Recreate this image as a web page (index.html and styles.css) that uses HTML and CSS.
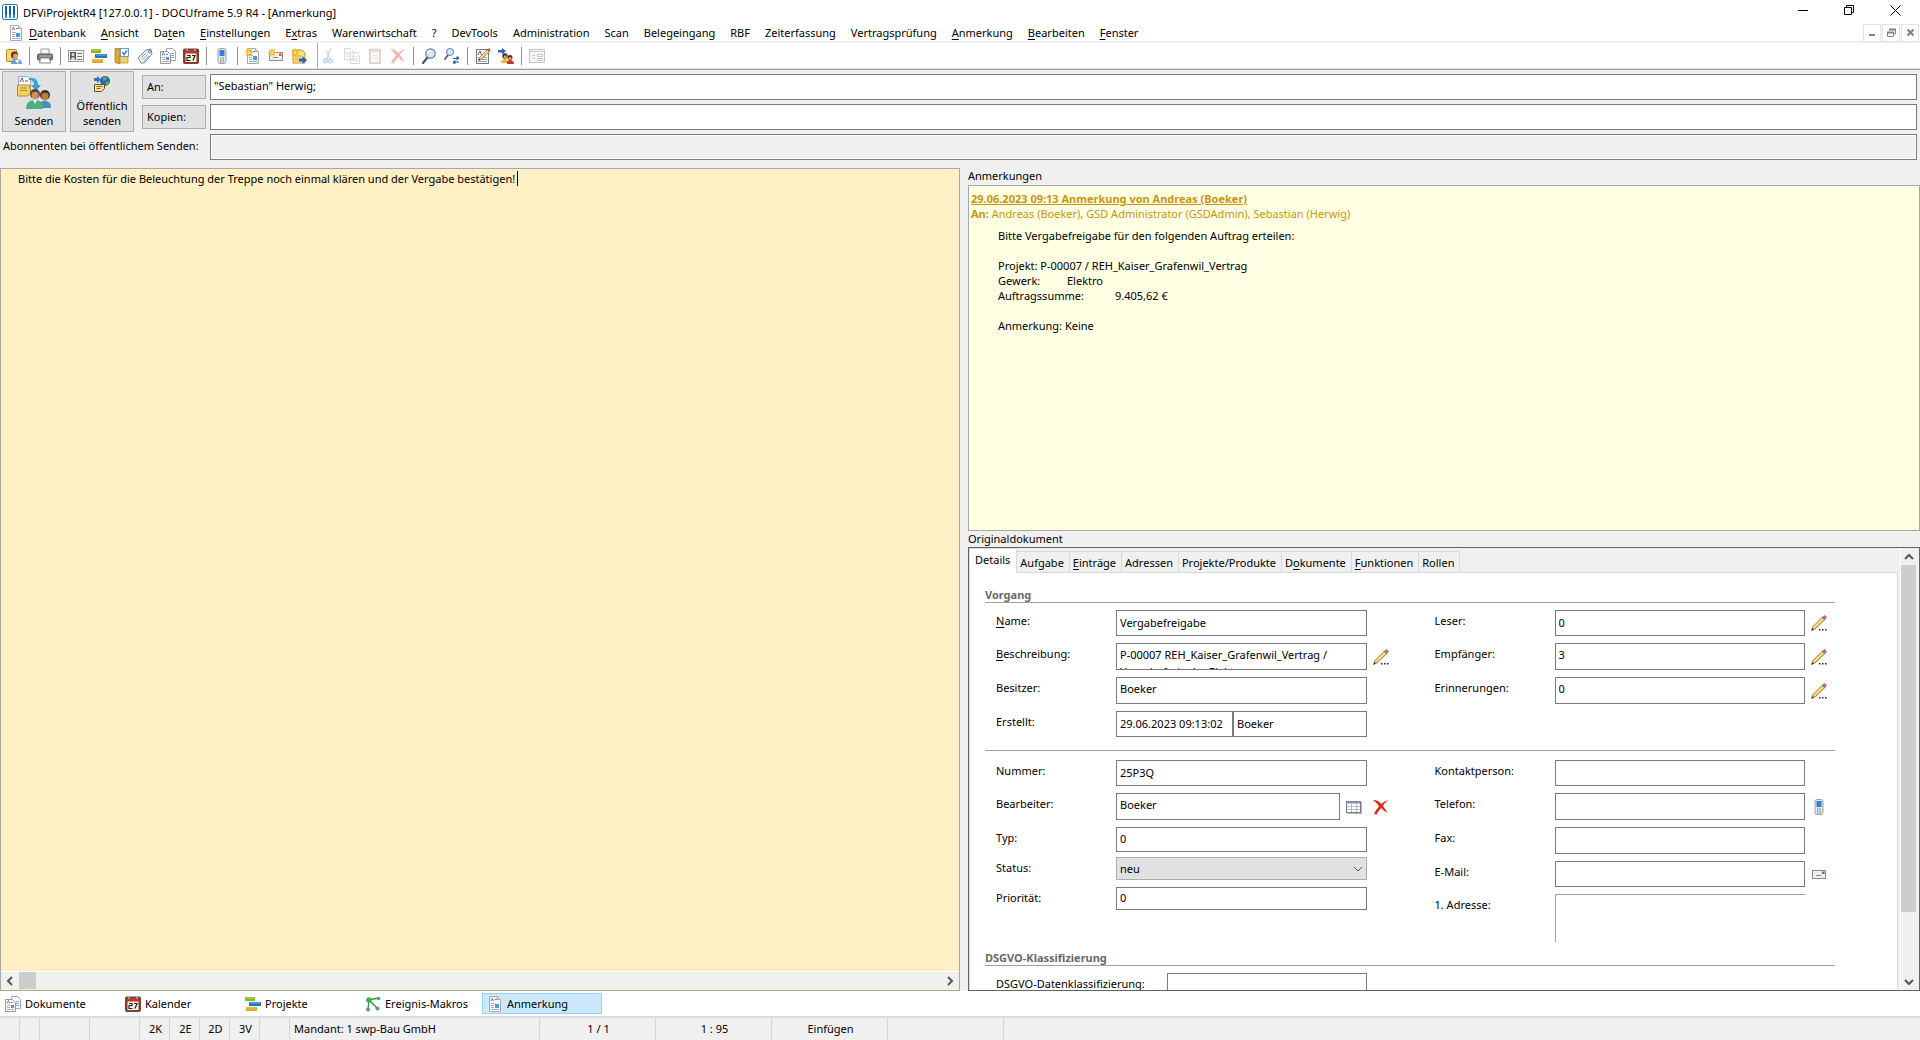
FILE: index.html
```
<!DOCTYPE html>
<html lang="de">
<head>
    <meta charset="UTF-8">
    <meta name="viewport" content="width=device-width, initial-scale=1.0">
    <title>DFViProjektR4 [127.0.0.1] - DOCUframe 5.9 R4 - [Anmerkung]</title>
    <link rel="stylesheet" href="styles.css">
</head>
<body>

<!-- icon set -->
<svg class="sprite" aria-hidden="true">
    <symbol id="i-logo" viewBox="0 0 16 16">
        <rect x="0.5" y="0.5" width="15" height="15" rx="2" fill="#fff" stroke="#1b6fae"/>
        <path d="M3 2h2v9H3zM7 2h2v9H7zM11 2h2v9h-2z" fill="#1b5f9a"/>
        <path d="M3 11h2v3H3zM7 11h2v3H7zM11 11h2v3h-2z" fill="#2c93d6"/>
    </symbol>
    <symbol id="i-doc" viewBox="0 0 16 16">
        <path d="M2.500 0.500h8l3 3v12h-11z" fill="#fff" stroke="#a8a8a8"/>
        <path d="M10.500 0.500v3h3" fill="#ddd" stroke="#a8a8a8"/>
        <path d="M4 5l1.500-3 1 3M8 3.500h2" fill="none" stroke="#5d66c9" stroke-width=".9"/>
        <path d="M4 7.500h4M4 9.500h3M4 11.500h3M4 13.500h8" stroke="#9aa0c8" stroke-width=".9"/>
        <rect x="8" y="8" width="4" height="4" fill="#4b9bd6"/>
    </symbol>
    <symbol id="i-docs" viewBox="0 0 16 16">
        <path d="M6.500 0.500h6l3 3v9h-9z" fill="#fff" stroke="#a8a8a8"/>
        <path d="M11 5.500h3M11 7.500h3M11 9.500h3" stroke="#7aa6d8"/>
        <path d="M0.500 3.500h7l3 3v9h-10z" fill="#fff" stroke="#999"/>
        <path d="M2 7.500l1.500-3 1 3M6 6.500h2" fill="none" stroke="#5d66c9" stroke-width=".9"/>
        <path d="M2 9.500h3M2 11.500h3M2 13.500h7" stroke="#9aa0c8" stroke-width=".9"/>
        <rect x="6" y="9" width="3" height="3" fill="#4b9bd6"/>
    </symbol>
    <symbol id="i-user" viewBox="0 0 16 16">
        <rect x="0.500" y="1.500" width="10" height="12" rx="1" fill="#f3d67a" stroke="#b88a24"/>
        <path d="M5 16c0-4 2-5 5-5s6 1 6 5z" fill="#6d9edb"/>
        <circle cx="8.500" cy="7" r="3.500" fill="#5b3413"/>
        <circle cx="9.500" cy="8" r="2.500" fill="#dfa373"/>
        <path d="M9 12l3 4 1-4z" fill="#fff"/>
    </symbol>
    <symbol id="i-printer" viewBox="0 0 16 16">
        <path d="M4 1h8v6H4z" fill="#f6f6f6" stroke="#999"/>
        <rect x="0.500" y="6" width="15" height="6" rx="1.500" fill="#74787c" stroke="#55595c"/>
        <path d="M2 8h12" stroke="#b9bdc0"/>
        <path d="M3.500 10h9l1 5h-11z" fill="#fff" stroke="#888"/>
        <circle cx="13.500" cy="8" r="0.800" fill="#7bdc62"/>
    </symbol>
    <symbol id="i-card" viewBox="0 0 16 16">
        <rect x="0.500" y="2.500" width="15" height="11" fill="#f4f4f2" stroke="#999"/>
        <rect x="2" y="4" width="6" height="8" fill="#56585a"/>
        <circle cx="5" cy="6.500" r="1.500" fill="#e4e4e4"/>
        <path d="M3 12c0-4 4-4 4 0z" fill="#d9d9d9"/>
        <path d="M9 5.500h5M9 8.500h5M9 11.500h5" stroke="#777"/>
    </symbol>
    <symbol id="i-gantt" viewBox="0 0 16 16">
        <rect x="0" y="1" width="10" height="4" rx="0.500" fill="#8cb81d"/>
        <rect x="4" y="6" width="12" height="4" rx="0.500" fill="#1c78c0"/>
        <rect x="1" y="11" width="11" height="4" rx="0.500" fill="#e5a427"/>
        <path d="M1 2h8M5 7h10M2 12h9" stroke="#fff" stroke-opacity=".4"/>
    </symbol>
    <symbol id="i-book" viewBox="0 0 16 16">
        <path d="M1 0.500h5V16l-5-1.500z" fill="#d9a93a" stroke="#a67918" stroke-width=".7"/>
        <path d="M6 7h8v8H6z" fill="#efcf72" stroke="#b88a24" stroke-width=".7"/>
        <rect x="6.500" y="0.500" width="8" height="8" fill="#fff" stroke="#6f9cc2"/>
        <path d="M8.500 4l1.500 2.500 3-4" fill="none" stroke="#2f6fae" stroke-width="1.300"/>
    </symbol>
    <symbol id="i-tag" viewBox="0 0 16 16">
        <path d="M1 10L9 2l5-1 1 5-8 9-3 0z" fill="#eef2f6" stroke="#7b8894"/>
        <path d="M4 10l5-5M5.500 11.500l5-5M7 13l5-5" stroke="#8aa5bd" stroke-width=".9"/>
        <circle cx="12.500" cy="3.500" r="1.200" fill="#fff" stroke="#64707b"/>
    </symbol>
    <symbol id="i-cal" viewBox="0 0 16 16">
        <rect x="0.500" y="1" width="15" height="14.500" rx="1" fill="#8b3a2b" stroke="#6e4a2d"/>
        <rect x="2" y="2" width="12" height="3" fill="#c2342c"/>
        <path d="M4 0v3M12 0v3" stroke="#aaa" stroke-width="1.500"/>
        <rect x="2.500" y="5.500" width="11" height="8.500" fill="#f8f4e8"/>
        <path d="M4 7.500h3v2H4v3h3.500M9 7.500h3l-2 5" fill="none" stroke="#222" stroke-width="1.200"/>
    </symbol>
    <symbol id="i-phone" viewBox="0 0 16 16">
        <rect x="4" y="0.500" width="8" height="15" rx="2" fill="#e6e8ea" stroke="#9da1a5"/>
        <rect x="5.500" y="2" width="5" height="6" fill="#2f83d6"/>
        <path d="M6 10h4M6 12h4M6 14h4" stroke="#777" stroke-dasharray="1 .5"/>
    </symbol>
    <symbol id="i-mail" viewBox="0 0 16 16">
        <rect x="1.500" y="4.500" width="13" height="8" fill="#efefef" stroke="#8b8b8b"/>
        <path d="M5 9.500h5" stroke="#888"/>
        <rect x="11" y="5.500" width="2.500" height="2.500" fill="#e34b3f"/>
    </symbol>
    <symbol id="i-star" viewBox="0 0 16 16">
        <path d="M4 0l1 2.500L7.500 1 6.300 3.500 9 4.500 6.300 5.300 7.500 8 5 6.500 4 9 3 6.500 0.500 8 1.700 5.300 0 4.500l1.700-1L.5 1 3 2.500z" fill="#f6b21b"/>
        <circle cx="4" cy="4.500" r="1.500" fill="#ffe680"/>
    </symbol>
    <symbol id="i-newfolder" viewBox="0 0 16 16">
        <path d="M2 2h9l3 3v10H2z" fill="#f8df83" stroke="#c3962a"/>
        <path d="M4 8h7M4 10h4M4 12h4" stroke="#d5ac46"/>
        <path d="M8 10.500h3.500V8l4.500 4-4.500 4v-2.500H8z" fill="#2b62c4"/>
        <use href="#i-star"/>
    </symbol>
    <symbol id="i-cut" viewBox="0 0 16 16">
        <path d="M10 0L6 10M5 3l4 8" stroke="#7d8790" stroke-width="1.300"/>
        <circle cx="4.500" cy="12.500" r="2" fill="none" stroke="#3b8ad8" stroke-width="1.500"/>
        <circle cx="9.500" cy="13" r="1.700" fill="none" stroke="#3b8ad8" stroke-width="1.500"/>
    </symbol>
    <symbol id="i-copy" viewBox="0 0 16 16">
        <path d="M0.500 0.500h6l3 3v8h-9zM6.500 4.500h6l3 3v8h-9z" fill="#fff" stroke="#8497a8"/>
        <path d="M2 4.500h5M2 6.500h4M2 8.500h4M8 8.500h5M8 10.500h6M8 12.500h6" stroke="#9db2c6"/>
    </symbol>
    <symbol id="i-paste" viewBox="0 0 16 16">
        <rect x="2.500" y="1.500" width="11" height="14" fill="#c49a6c" stroke="#96704a"/>
        <path d="M4 4h8v10H4z" fill="#f5f5f5"/>
        <path d="M5 0.500h6V4H5z" fill="#9aa3ab"/>
        <path d="M5 7.500h6M5 9.500h6M5 11.500h6" stroke="#bbb"/>
    </symbol>
    <symbol id="i-x" viewBox="0 0 16 16">
        <path d="M0 1c4-.5 7 2 8.500 4C10 3.500 12 1.500 15.500 1 13 3 10.500 5 10 7c1.500 2 3 4.500 4.500 6.500-3-1-4.500-2.500-6-4.500C6.500 11 4.500 13 4 15.500L1 15c1-3 3-5 5-7.500C4.500 5 2.500 3 0 1z" fill="#db2f1c"/>
    </symbol>
    <symbol id="i-zoom" viewBox="0 0 16 16">
        <path d="M6.500 9.500L2 15" stroke="#555" stroke-width="2.200" stroke-linecap="round"/>
        <circle cx="9.500" cy="5.500" r="4.700" fill="#d3e8fa" stroke="#6a7e90" stroke-width="1.200"/>
        <path d="M7 5c0-2 2-2.500 3-2.500" fill="none" stroke="#fff" stroke-width="1.500"/>
    </symbol>
    <symbol id="i-replace" viewBox="0 0 16 16">
        <path d="M4 7L1 11" stroke="#666" stroke-width="2" stroke-linecap="round"/>
        <circle cx="6" cy="4" r="3.500" fill="#d3e8fa" stroke="#6a7e90"/>
        <path d="M9 10.500h5V8.500M15 14h-5v2" fill="none" stroke="#2a5f9e" stroke-width="1.200"/>
        <path d="M12.500 8l3 2.500-3 2zM11.500 12l-3 2 3 2z" fill="#2a5f9e"/>
    </symbol>
    <symbol id="i-pen" viewBox="0 0 16 16">
        <path d="M0.500 15.500l1.500-4L12 1.500l2.500 2.500L4 14z" fill="#efcb66" stroke="#8b6a2b" stroke-width=".8"/>
        <path d="M3 12.500L13 2.500" stroke="#fff3b8"/>
        <path d="M11 2.500l2.500 2.500 1-1L12 1.500z" fill="#3d8a5b"/>
        <path d="M12.200 1.300L13.500 0l2.500 2.500-1.300 1.300z" fill="#dd5468"/>
        <path d="M0.500 15.500l1-2.500 1.500 1.500z" fill="#333"/>
    </symbol>
    <symbol id="i-pencil" viewBox="0 0 16 16">
        <use href="#i-pen"/>
        <path d="M8 14h1.500v1.500H8zM11 14h1.500v1.500H11zM14 14h1.500v1.500H14z" fill="#222"/>
    </symbol>
    <symbol id="i-edit" viewBox="0 0 16 16">
        <path d="M1.500 1.500h12v14h-12z" fill="#fff" stroke="#777"/>
        <path d="M3 7l2-4 1.500 4" fill="none" stroke="#4450c0"/>
        <path d="M3 9.500h9M3 11.500h9M3 13.500h9" stroke="#9aa0c8"/>
        <use href="#i-pen" x="3" y="0" width="13" height="13"/>
    </symbol>
    <symbol id="i-users" viewBox="0 0 16 16">
        <path d="M0 2h4V0l4 3-4 3.500V4.500H0z" fill="#2b62c4"/>
        <circle cx="7" cy="8" r="2.700" fill="#4b2c14"/>
        <circle cx="12" cy="9.500" r="2.500" fill="#4b2c14"/>
        <circle cx="7.300" cy="8.800" r="1.600" fill="#dfa373"/>
        <circle cx="12" cy="10.300" r="1.500" fill="#dfa373"/>
        <path d="M3 15c0-3 2-4 4-4s3 1 3 4z" fill="#e9b92f"/>
        <path d="M9 16c0-3 1-4 3-4s4 1 4 4z" fill="#c0392b"/>
    </symbol>
    <symbol id="i-form" viewBox="0 0 16 16">
        <rect x="0.500" y="1.500" width="15" height="13" fill="#f8f8f8" stroke="#c4c4c4"/>
        <path d="M1 3.500h14M3 7.500h3M3 10.500h3" stroke="#c9c9c9"/>
        <path d="M8.500 6.500h5v2h-5zM8.500 10.500h5v2h-5z" fill="#fff" stroke="#c4c4c4"/>
    </symbol>
    <symbol id="i-macro" viewBox="0 0 16 16">
        <path d="M4 4l9-2M4 4l-1 9M4 4l8 8" stroke="#3c8a46" stroke-width="1.300"/>
        <circle cx="4" cy="4" r="2.800" fill="#39b54a"/>
        <circle cx="13.500" cy="2.500" r="1.800" fill="#5aa06a"/>
        <circle cx="3" cy="13.500" r="2" fill="#5aa06a"/>
        <circle cx="12.500" cy="12.500" r="2" fill="#5aa06a"/>
    </symbol>
    <symbol id="i-grid" viewBox="0 0 16 16">
        <rect x="1.500" y="3" width="14.500" height="12" fill="#b5b5b5"/>
        <rect x="0.500" y="2.500" width="14" height="11" fill="#fff" stroke="#7a7f86"/>
        <path d="M1 3.500h13" stroke="#8496aa" stroke-width="2"/>
        <path d="M1 7.500h13M1 10.500h13M5.500 5v8M10.500 5v8" stroke="#b4bac0"/>
    </symbol>
    <symbol id="i-send" viewBox="0 0 34 34">
        <path d="M1.500 0.500h9l3 3v14h-12z" fill="#fff" stroke="#aaa"/>
        <path d="M3 6l2-4 1.500 4M8 5h3" fill="none" stroke="#4450c0"/>
        <path d="M0.500 9h12l1 8-3 3h-10z" fill="#f2d067" stroke="#b88a24"/>
        <path d="M3 12h7M3 14.500h7" stroke="#b88a24"/>
        <path d="M12 2c6-1 9 2 9 7h3l-5 6-5-6h3c0-3-1-5-5-5z" fill="#3aa0dc"/>
        <circle cx="18" cy="18" r="5" fill="#62401f"/>
        <circle cx="28" cy="19" r="5" fill="#4d3018"/>
        <path d="M14.500 18c0-3 7-3 7 0s-1 5.500-3.500 5.500-3.500-2.500-3.500-5.500z" fill="#c98f63"/>
        <path d="M24.500 19c0-3 7-3 7 0s-1 5.500-3.500 5.500-3.500-2.500-3.500-5.500z" fill="#b97d52"/>
        <path d="M21 32c0-6 3-7 7-7s6 2 6 7z" fill="#3f93bb"/>
        <path d="M9 33c0-7 4-9 9-9s8 3 8 9z" fill="#4fae84"/>
        <path d="M16 24l2 4 2-4z" fill="#e6f5ee"/>
    </symbol>
    <symbol id="i-public" viewBox="0 0 16 16">
        <circle cx="11" cy="5" r="5" fill="#2b62b8"/>
        <path d="M9 1l4 0-1 3-3 1zM12 6l3-1-1 4-2 0z" fill="#58b54c"/>
        <path d="M0 2h3V0l4 3.500L3 7V5H0z" fill="#2f6fc8"/>
        <path d="M0.500 8.500h10v4l-3 3h-7z" fill="#f8df9b" stroke="#6b4e1c"/>
        <path d="M2.500 10.500h6M2.500 12.500h4" stroke="#8a6a30"/>
    </symbol>
    <symbol id="i-chev" viewBox="0 0 10 10">
        <path d="M1 3l4 4 4-4" fill="none" stroke="currentColor" stroke-width="var(--w, 1)"/>
    </symbol>
</svg>

<header class="titlebar">
    <svg class="icon"><use href="#i-logo"/></svg>
    <h1>DFViProjektR4 [127.0.0.1] - DOCUframe 5.9 R4 - [Anmerkung]</h1>
    <div class="window-buttons">
        <button type="button" aria-label="Minimieren"><svg viewBox="0 0 11 11"><path d="M0 5.500h10" stroke="#000"/></svg></button>
        <button type="button" aria-label="Wiederherstellen"><svg viewBox="0 0 11 11"><path d="M0.500 2.500h7v7h-7zM2.500 2.500v-2h7v7h-2" fill="none" stroke="#000"/></svg></button>
        <button type="button" aria-label="Schließen"><svg viewBox="0 0 11 11"><path d="M0.500 0.500l10 10M10.500 0.500l-10 10" stroke="#000"/></svg></button>
    </div>
</header>

<nav class="menubar">
    <svg class="icon"><use href="#i-doc"/></svg>
    <ul>
        <li><button type="button"><u>D</u>atenbank</button></li>
        <li><button type="button"><u>A</u>nsicht</button></li>
        <li><button type="button">Da<u>t</u>en</button></li>
        <li><button type="button"><u>E</u>instellungen</button></li>
        <li><button type="button">E<u>x</u>tras</button></li>
        <li><button type="button">Warenwirtschaft</button></li>
        <li><button type="button">?</button></li>
        <li><button type="button">DevTools</button></li>
        <li><button type="button">Administration</button></li>
        <li><button type="button">Scan</button></li>
        <li><button type="button">Belegeingang</button></li>
        <li><button type="button">RBF</button></li>
        <li><button type="button">Zeiterfassung</button></li>
        <li><button type="button">Vertragsprüfung</button></li>
        <li><button type="button"><u>A</u>nmerkung</button></li>
        <li><button type="button"><u>B</u>earbeiten</button></li>
        <li><button type="button"><u>F</u>enster</button></li>
    </ul>
    <div class="mdi-buttons">
        <button type="button" aria-label="Fenster minimieren"><svg viewBox="0 0 9 9"><path d="M1 7h6" stroke="#76879a" stroke-width="2"/></svg></button>
        <button type="button" aria-label="Fenster wiederherstellen"><svg viewBox="0 0 9 9"><path d="M2.500 3V1.500h6V6H7M0.500 4.500h6v4h-6z" fill="none" stroke="#76879a"/><path d="M2 1.500h7M0 4.500h7" stroke="#76879a" stroke-width="2"/></svg></button>
        <button type="button" aria-label="Fenster schließen"><svg viewBox="0 0 9 9"><path d="M1.500 1.500l6 6M7.500 1.500l-6 6" stroke="#76879a" stroke-width="2.200"/></svg></button>
    </div>
</nav>

<div class="toolbar">
    <button type="button" aria-label="Anmelden"><svg class="icon"><use href="#i-user"/></svg></button>
    <span class="sep"></span>
    <button type="button" aria-label="Drucken"><svg class="icon"><use href="#i-printer"/></svg></button>
    <span class="sep"></span>
    <button type="button" aria-label="Adressen"><svg class="icon"><use href="#i-card"/></svg></button>
    <button type="button" aria-label="Projekte"><svg class="icon"><use href="#i-gantt"/></svg></button>
    <button type="button" aria-label="Vorgänge"><svg class="icon"><use href="#i-book"/></svg></button>
    <button type="button" aria-label="Produkte"><svg class="icon"><use href="#i-tag"/></svg></button>
    <button type="button" aria-label="Dokumente"><svg class="icon"><use href="#i-docs"/></svg></button>
    <button type="button" aria-label="Kalender"><svg class="icon"><use href="#i-cal"/></svg></button>
    <span class="sep"></span>
    <button type="button" aria-label="Telefon"><svg class="icon"><use href="#i-phone"/></svg></button>
    <span class="sep"></span>
    <button type="button" aria-label="Neues Dokument"><svg class="icon"><use href="#i-doc"/><use href="#i-star"/></svg></button>
    <button type="button" aria-label="Neue E-Mail"><svg class="icon"><use href="#i-mail"/><use href="#i-star"/></svg></button>
    <button type="button" aria-label="Neuer Vorgang"><svg class="icon"><use href="#i-newfolder"/></svg></button>
    <span class="sep sep-full"></span>
    <button type="button" disabled aria-label="Ausschneiden"><svg class="icon"><use href="#i-cut"/></svg></button>
    <button type="button" disabled aria-label="Kopieren"><svg class="icon"><use href="#i-copy"/></svg></button>
    <button type="button" disabled aria-label="Einfügen"><svg class="icon"><use href="#i-paste"/></svg></button>
    <button type="button" disabled aria-label="Löschen"><svg class="icon"><use href="#i-x"/></svg></button>
    <span class="sep"></span>
    <button type="button" aria-label="Suchen"><svg class="icon"><use href="#i-zoom"/></svg></button>
    <button type="button" aria-label="Ersetzen"><svg class="icon"><use href="#i-replace"/></svg></button>
    <span class="sep"></span>
    <button type="button" aria-label="Bearbeiten"><svg class="icon"><use href="#i-edit"/></svg></button>
    <button type="button" aria-label="Senden an"><svg class="icon"><use href="#i-users"/></svg></button>
    <span class="sep"></span>
    <button type="button" aria-label="Formular"><svg class="icon"><use href="#i-form"/></svg></button>
</div>

<section class="compose">
    <button type="button" class="btn btn-big"><svg class="icon-big"><use href="#i-send"/></svg><span>Senden</span></button>
    <button type="button" class="btn btn-big"><svg class="icon"><use href="#i-public"/></svg><span>Öffentlich<br>senden</span></button>
    <button type="button" class="btn">An:</button>
    <input type="text" class="field" aria-label="An" value="&quot;Sebastian&quot; Herwig;">
    <button type="button" class="btn">Kopien:</button>
    <input type="text" class="field" aria-label="Kopien">
    <label class="compose-label" for="abonnenten">Abonnenten bei öffentlichem Senden:</label>
    <input type="text" class="field readonly" id="abonnenten" readonly>
</section>

<main>
    <section class="editor">
        <textarea id="text" aria-label="Anmerkungstext" spellcheck="false">Bitte die Kosten für die Beleuchtung der Treppe noch einmal klären und der Vergabe bestätigen!</textarea>
        <span class="caret"></span>
        <div class="hscroll">
            <button type="button" aria-label="Nach links"><svg class="chev left"><use href="#i-chev"/></svg></button>
            <div class="track"><div class="thumb"></div></div>
            <button type="button" aria-label="Nach rechts"><svg class="chev right"><use href="#i-chev"/></svg></button>
        </div>
    </section>

    <div class="side">
        <h2>Anmerkungen</h2>
        <section class="notes">
            <h3>29.06.2023 09:13 Anmerkung von Andreas (Boeker)</h3>
            <p class="to"><b>An:</b> Andreas (Boeker), GSD Administrator (GSDAdmin), Sebastian (Herwig)</p>
            <div class="note-text">
                <p>Bitte Vergabefreigabe für den folgenden Auftrag erteilen:</p>
                <p>Projekt: P-00007 / REH_Kaiser_Grafenwil_Vertrag<br>
                    <span class="gewerk">Gewerk:</span>Elektro<br>
                    <span class="summe">Auftragssumme:</span>9.405,62 €</p>
                <p>Anmerkung: Keine</p>
            </div>
        </section>

        <h2 class="doc-title">Originaldokument</h2>
        <section class="document">
            <div class="doc-page">
                <div class="tabs" role="tablist">
                    <button type="button" role="tab" class="active" aria-selected="true">Details</button>
                    <button type="button" role="tab">Aufgabe</button>
                    <button type="button" role="tab"><u>E</u>inträge</button>
                    <button type="button" role="tab">Adressen</button>
                    <button type="button" role="tab">Projekte/Produkte</button>
                    <button type="button" role="tab">D<u>o</u>kumente</button>
                    <button type="button" role="tab"><u>F</u>unktionen</button>
                    <button type="button" role="tab">Rollen</button>
                </div>
                <form class="tab-body">
                    <h4>Vorgang</h4>
                    <div class="group">
                        <div class="col">
                            <div class="row"><label for="name"><u>N</u>ame:</label><input class="field" id="name" value="Vergabefreigabe"></div>
                            <div class="row tall"><label for="beschr"><u>B</u>eschreibung:</label><textarea class="field" id="beschr">P-00007 REH_Kaiser_Grafenwil_Vertrag /
Vergabefreigabe Elektro</textarea><button type="button" aria-label="Beschreibung bearbeiten"><svg class="icon"><use href="#i-pencil"/></svg></button></div>
                            <div class="row tall"><label for="besitzer">Besitzer:</label><input class="field" id="besitzer" value="Boeker"></div>
                            <div class="row"><label for="erstellt">Erstellt:</label>
                                <div class="control"><input class="field date" id="erstellt" value="29.06.2023 09:13:02"><input class="field" aria-label="Erstellt von" value="Boeker"></div>
                            </div>
                        </div>
                        <div class="col right">
                            <div class="row"><label for="leser">Leser:</label><input class="field" id="leser" value="0"><button type="button" aria-label="Leser bearbeiten"><svg class="icon"><use href="#i-pencil"/></svg></button></div>
                            <div class="row tall"><label for="empf">Empfänger:</label><input class="field" id="empf" value="3"><button type="button" aria-label="Empfänger bearbeiten"><svg class="icon"><use href="#i-pencil"/></svg></button></div>
                            <div class="row tall"><label for="erinn">Erinnerungen:</label><input class="field" id="erinn" value="0"><button type="button" aria-label="Erinnerungen bearbeiten"><svg class="icon"><use href="#i-pencil"/></svg></button></div>
                        </div>
                    </div>
                    <hr>
                    <div class="group second">
                        <div class="col">
                            <div class="row"><label for="nummer">Nummer:</label><input class="field" id="nummer" value="25P3Q"></div>
                            <div class="row tall"><label for="bearb">Bearbeiter:</label>
                                <div class="control picker"><input class="field" id="bearb" value="Boeker"><button type="button" aria-label="Bearbeiter wählen"><svg class="icon"><use href="#i-grid"/></svg></button></div>
                                <button type="button" aria-label="Bearbeiter entfernen"><svg class="icon"><use href="#i-x"/></svg></button></div>
                            <div class="row typ"><label for="typ">Typ:</label><input class="field" id="typ" value="0"></div>
                            <div class="row low"><label for="status">Status:</label>
                                <div class="control select"><select id="status"><option>neu</option></select><svg class="chev"><use href="#i-chev"/></svg></div>
                            </div>
                            <div class="row low"><label for="prio">Priorität:</label><input class="field" id="prio" value="0"></div>
                        </div>
                        <div class="col right">
                            <div class="row"><label for="kontakt">Kontaktperson:</label><input class="field" id="kontakt"></div>
                            <div class="row tall"><label for="telefon">Telefon:</label><input class="field" id="telefon"><button type="button" aria-label="Anrufen"><svg class="icon"><use href="#i-phone"/></svg></button></div>
                            <div class="row tall"><label for="fax">Fax:</label><input class="field" id="fax"></div>
                            <div class="row"><label for="email">E-Mail:</label><input class="field" id="email"><button type="button" aria-label="E-Mail schreiben"><svg class="icon"><use href="#i-mail"/></svg></button></div>
                            <div class="row address"><label for="adresse">1. Adresse:</label><textarea id="adresse" readonly></textarea></div>
                        </div>
                    </div>
                    <h4>DSGVO-Klassifizierung</h4>
                    <div class="group">
                        <div class="col">
                            <div class="row wide"><label for="dsgvo">DSGVO-Datenklassifizierung:</label><input class="field" id="dsgvo"></div>
                        </div>
                        <div class="col right"></div>
                    </div>
                </form>
            </div>
            <div class="vscroll">
                <button type="button" aria-label="Nach oben"><svg class="chev up"><use href="#i-chev"/></svg></button>
                <div class="track"><div class="thumb"></div></div>
                <button type="button" aria-label="Nach unten"><svg class="chev"><use href="#i-chev"/></svg></button>
            </div>
        </section>
    </div>
</main>

<nav class="taskbar">
    <button type="button"><svg class="icon"><use href="#i-docs"/></svg>Dokumente</button>
    <button type="button"><svg class="icon"><use href="#i-cal"/></svg>Kalender</button>
    <button type="button"><svg class="icon"><use href="#i-gantt"/></svg>Projekte</button>
    <button type="button"><svg class="icon"><use href="#i-macro"/></svg>Ereignis-Makros</button>
    <button type="button" class="active"><svg class="icon"><use href="#i-doc"/></svg>Anmerkung</button>
</nav>

<footer class="statusbar">
    <span class="w20"></span>
    <span class="w20"></span>
    <span class="w50"></span>
    <span class="w50"></span>
    <span class="w30">2K</span>
    <span class="w30">2E</span>
    <span class="w30">2D</span>
    <span class="w30">3V</span>
    <span class="w30"></span>
    <span class="mandant">Mandant: 1 swp-Bau GmbH</span>
    <span class="w116">1 / 1</span>
    <span class="w116">1 : 95</span>
    <span class="w116">Einfügen</span>
    <span class="w116"></span>
</footer>

</body>
</html>
```
FILE: styles.css
```
* {
    box-sizing: border-box;
}

body {
    display: flex;
    flex-direction: column;
    height: 100vh;
    margin: 0;
    overflow: hidden;
    background-color: #f0f0f0;
    color: #000;
    font: 11px/15px "Noto Sans", "Open Sans", sans-serif;
}

h1, h2, h3, h4, p, ul {
    margin: 0;
    padding: 0;
    font-size: 11px;
    font-weight: normal;
}

button, input, textarea, select {
    margin: 0;
    padding: 0;
    border: none;
    border-radius: 0;
    background: none;
    color: inherit;
    font: inherit;
    outline: none;
}

u {
    text-underline-offset: 2px;
}

.sprite {
    position: absolute;
    width: 0;
    height: 0;
}

.icon {
    display: block;
    flex: none;
    width: 16px;
    height: 16px;
}

.chev {
    display: block;
    width: 10px;
    height: 10px;
    margin: auto;
    color: #555;
    --w: 2;
}

.chev.left { transform: rotate(90deg); }
.chev.right { transform: rotate(-90deg); }
.chev.up { transform: rotate(180deg); }

/* title and menu */
.titlebar {
    display: flex;
    align-items: center;
    height: 24px;
    padding: 0 2px;
    background-color: #fff;
}

.titlebar h1 {
    flex: 1;
    padding-left: 5px;
}

.window-buttons {
    display: flex;
    align-self: stretch;
}

.window-buttons button {
    width: 46px;
    height: 20px;
}

.window-buttons svg {
    display: block;
    width: 11px;
    height: 11px;
    margin: 0 auto;
}

.menubar {
    display: flex;
    align-items: center;
    height: 19px;
    padding-left: 8px;
    background-color: #fff;
    border-bottom: 2px solid #f0f0f0;
}

.menubar ul {
    display: flex;
    flex: 1;
    gap: 15px;
    padding-left: 5px;
    list-style: none;
}

.menubar li button {
    display: block;
}

.mdi-buttons {
    display: flex;
    gap: 1px;
    padding-right: 1px;
}

.mdi-buttons button {
    width: 18px;
    height: 18px;
    background-color: #fff;
    border: 1px solid #e3e3e3;
}

.mdi-buttons svg {
    display: block;
    width: 9px;
    height: 9px;
    margin: 0 auto;
}

.toolbar {
    display: flex;
    align-items: center;
    gap: 7px;
    height: 27px;
    padding-left: 6px;
    background-color: #fff;
    border-bottom: 1px solid #a0a0a0;
    box-shadow: inset 0 -1px #e3e3e3;
}

.toolbar button:disabled {
    opacity: 0.35;
}

.sep {
    width: 1px;
    height: 18px;
    background-color: #8d8d8d;
}

.sep-full {
    height: 26px;
    margin: 0 -4px 0 3px;
    background-color: #b0b0b0;
}

/* recipients */
.compose {
    display: grid;
    grid-template-columns: 64px 64px 64px 1fr;
    grid-template-rows: 26px 26px 26px;
    gap: 4px;
    align-items: center;
    padding: 4px 3px 8px 2px;
}

.btn {
    height: 24px;
    margin-left: 4px;
    margin-right: -4px;
    padding: 0 4px 1px;
    background-color: #e1e1e1;
    border: 1px solid #adadad;
    text-align: left;
}

.btn-big {
    display: flex;
    flex-direction: column;
    align-items: center;
    justify-content: space-between;
    grid-row: span 2;
    height: 61px;
    margin: -3px 0 -2px;
    padding: 4px 0 3px;
    text-align: center;
}

.icon-big {
    width: 34px;
    height: 34px;
}

.compose .field {
    height: 26px;
    margin-left: 4px;
    padding-bottom: 4px;
}

.compose-label {
    grid-column: span 3;
    padding: 0 0 3px 1px;
    white-space: nowrap;
}

.field {
    display: block;
    min-width: 0;
    padding: 0 3px 2px;
    background-color: #fff;
    border: 1px solid #7a7a7a;
}

.field.readonly {
    background-color: #f0f0f0;
    box-shadow: inset 0 0 0 1px #fff;
}

/* editor and notes */
main {
    display: flex;
    flex: 1;
    gap: 8px;
    min-height: 0;
}

.editor {
    position: relative;
    display: flex;
    flex-direction: column;
    width: 50%;
    padding-bottom: 1px;
    background-color: #ffefc4;
    border: 1px solid #a8a8a8;
}

.editor textarea {
    flex: 1;
    padding: 2px 17px;
    resize: none;
}

.caret {
    position: absolute;
    top: 2px;
    left: 516px;
    width: 1px;
    height: 15px;
    background-color: #000;
}

.hscroll {
    display: flex;
    height: 18px;
    background-color: #f0f0f0;
    border-top: 1px solid #fff;
}

.hscroll button {
    width: 18px;
}

.track {
    flex: 1;
}

.thumb {
    background-color: #cdcdcd;
}

.hscroll .thumb {
    width: 17px;
    height: 17px;
}

.side {
    display: grid;
    flex: 1;
    grid-template-rows: 17px minmax(0, 346fr) 16px minmax(0, 444fr);
    grid-template-columns: minmax(0, 1fr);
    min-width: 0;
}

.side .doc-title {
    padding-bottom: 1px;
}

.notes {
    padding: 5px 2px;
    background-color: #ffffe3;
    border: 1px solid #a8a8a8;
    overflow: hidden;
}

.notes h3 {
    color: #c8960c;
    font-weight: bold;
    text-decoration: underline;
}

.to {
    color: #c8960c;
}

.note-text {
    padding: 7px 27px;
}

.note-text p {
    margin-bottom: 15px;
}

.gewerk, .summe {
    display: inline-block;
    width: 69px;
}

.summe {
    width: 117px;
}

/* original document */
.document {
    display: flex;
    border: 1px solid #646464;
    overflow: hidden;
}

.doc-page {
    display: flex;
    flex: 1;
    flex-direction: column;
    min-width: 0;
    padding-right: 2px;
}

.tabs {
    display: flex;
    align-items: flex-end;
    height: 25px;
    margin-bottom: -1px;
}

.tabs button {
    height: 22px;
    padding: 0 5px 0 3px;
    border: 1px solid #d9d9d9;
    border-left: none;
}

.tabs .active {
    z-index: 1;
    height: 25px;
    padding: 0 6px 2px 5px;
    background-color: #fff;
    border-left: 1px solid #d9d9d9;
    border-bottom-color: #fff;
}

.tab-body {
    flex: 1;
    padding: 14px 62px 0 15px;
    background-color: #fff;
    border: 1px solid #d9d9d9;
    border-bottom: none;
}

.tab-body h4 {
    margin-bottom: 7px;
    border-bottom: 1px solid #a0a0a0;
    color: #696969;
    font-weight: bold;
}

.tab-body hr {
    margin: 13px 0 9px;
    border: none;
    border-top: 1px solid #a0a0a0;
}

.group {
    display: flex;
    padding-left: 11px;
}

.group.second {
    margin-bottom: 8px;
}

.col {
    display: flex;
    flex: 1 1 188px;
    flex-direction: column;
    gap: 7px;
    min-width: 0;
}

.col.right {
    flex-basis: 150px;
}

.row {
    display: grid;
    grid-template-columns: 120px 1fr 68px;
    height: 26px;
}

.right .row {
    grid-template-columns: 120px 1fr 30px;
}

.row.tall {
    height: 27px;
}

.row.tall .field {
    padding-bottom: 4px;
}

.row.typ {
    height: 25px;
    margin-bottom: -2px;
}

.row.low {
    height: 23px;
}

.row.wide {
    grid-template-columns: 171px 1fr 68px;
}

.row label {
    padding-top: 3px;
}

.row > button {
    padding-left: 6px;
}

.row.tall textarea {
    padding: 2px 3px 0;
    line-height: 17px;
    resize: none;
    overflow: hidden;
    white-space: pre;
}

.control {
    display: flex;
    min-width: 0;
}

.control .field {
    flex: 1;
}

.control .date {
    flex: 0 0 117px;
}

.picker {
    gap: 6px;
    padding-right: 5px;
}

.select {
    position: relative;
}

.select select {
    flex: 1;
    padding: 0 3px;
    appearance: none;
    background-color: #e1e1e1;
    border: 1px solid #adadad;
}

.select .chev {
    position: absolute;
    top: 7px;
    right: 4px;
    pointer-events: none;
    --w: 1;
}

.right .address {
    height: 48px;
}

.address textarea {
    border-top: 1px solid #a0a0a0;
    border-left: 1px solid #a0a0a0;
    resize: none;
}

.vscroll {
    display: flex;
    flex-direction: column;
    width: 19px;
    padding-right: 3px;
    border-left: 1px solid #fff;
}

.vscroll button {
    height: 17px;
}

.vscroll .thumb {
    height: 85%;
}

/* open windows and status */
.taskbar {
    display: flex;
    padding: 2px;
    background-color: #fff;
    border-bottom: 2px solid #d9d9d9;
}

.taskbar button {
    display: flex;
    align-items: center;
    gap: 4px;
    width: 120px;
    height: 21px;
    padding-left: 3px;
}

.taskbar .active {
    padding-left: 4px;
    background-color: #cce8ff;
    border: 1px solid #99d1ff;
}

.statusbar {
    display: flex;
    height: 22px;
    line-height: 22px;
}

.statusbar span {
    padding-left: 2px;
    border-right: 1px solid #d4d4d4;
    text-align: center;
}

.w20 { width: 20px; }
.w30 { width: 30px; }
.w50 { width: 50px; }
.w116 { width: 116px; }

.statusbar .mandant {
    width: 250px;
    padding-left: 4px;
    text-align: left;
}
```
